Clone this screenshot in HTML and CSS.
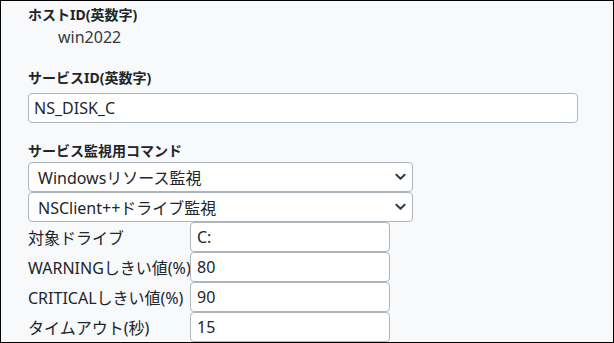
FILE: index.html
```html
<!DOCTYPE html>
<html lang="ja">
<head>
    <meta charset="UTF-8">
    <meta name="viewport" content="width=device-width, initial-scale=1.0">
    <title>サービス設定</title>
    <link rel="stylesheet" href="styles.css">
</head>
<body>
    <div class="frame">
        <div class="group">
            <div class="field-label">ホストID(英数字)</div>
            <div class="host-value">win2022</div>
        </div>

        <div class="group group-service">
            <label class="field-label" for="serviceId">サービスID(英数字)</label>
            <input type="text" id="serviceId" class="form-control wide" value="NS_DISK_C">
        </div>

        <div class="group group-command">
            <div class="field-label">サービス監視用コマンド</div>
            <div class="select-box">
                <span>Windowsリソース監視</span>
                <svg class="chevron" viewBox="0 0 12 8" width="11" height="8"><path d="M1.5 1.5 6 6l4.5-4.5" fill="none" stroke="#343a40" stroke-width="2.2" stroke-linecap="round" stroke-linejoin="round"/></svg>
            </div>
            <div class="select-box">
                <span>NSClient++ドライブ監視</span>
                <svg class="chevron" viewBox="0 0 12 8" width="11" height="8"><path d="M1.5 1.5 6 6l4.5-4.5" fill="none" stroke="#343a40" stroke-width="2.2" stroke-linecap="round" stroke-linejoin="round"/></svg>
            </div>

            <div class="params">
                <div class="param-row">
                    <label class="param-label">対象ドライブ</label>
                    <input type="text" class="form-control param-input" value="C:">
                </div>
                <div class="param-row">
                    <label class="param-label">WARNINGしきい値(%)</label>
                    <input type="text" class="form-control param-input" value="80">
                </div>
                <div class="param-row">
                    <label class="param-label">CRITICALしきい値(%)</label>
                    <input type="text" class="form-control param-input" value="90">
                </div>
                <div class="param-row">
                    <label class="param-label">タイムアウト(秒)</label>
                    <input type="text" class="form-control param-input" value="15">
                </div>
            </div>
        </div>
    </div>
</body>
</html>
```

FILE: styles.css
```css
html, body {
    margin: 0;
    padding: 0;
}
body {
    font-family: "Noto Sans", "Noto Sans CJK JP", sans-serif;
    color: #212529;
}
.frame {
    box-sizing: border-box;
    width: 614px;
    height: 343px;
    border: 1px solid #000;
    background: #f8f9fa;
    padding: 4px 0 0 27px;
    overflow: hidden;
}
.field-label {
    display: block;
    font-weight: bold;
    font-size: 14px;
    line-height: 20px;
}
.host-value {
    font-size: 16px;
    line-height: 24px;
    padding-left: 30px;
    color: #343a40;
}
.group-service {
    margin-top: 19px;
}
.group-service .field-label {
    margin-bottom: 5px;
}
.group-command {
    margin-top: 18px;
}
.group-command .field-label {
    margin-bottom: 1px;
}
.form-control {
    box-sizing: border-box;
    display: block;
    height: 30px;
    padding: 0 5px;
    font-family: inherit;
    font-size: 16px;
    color: #212529;
    background: #fff;
    border: 1px solid #adb5bd;
    border-radius: 4px;
    outline: none;
}
.wide {
    width: 550px;
}
.select-box {
    box-sizing: border-box;
    width: 385px;
    height: 30px;
    display: flex;
    align-items: center;
    justify-content: space-between;
    padding: 0 6px 0 9px;
    font-size: 16px;
    background: #fff;
    border: 1px solid #adb5bd;
    border-radius: 4px;
}
.params {
    display: flex;
    flex-direction: column;
}
.param-row {
    display: flex;
    align-items: center;
    height: 30px;
}
.param-label {
    width: 162px;
    font-size: 16px;
    white-space: nowrap;
}
.param-input {
    width: 200px;
    padding: 0 6px;
}
```
